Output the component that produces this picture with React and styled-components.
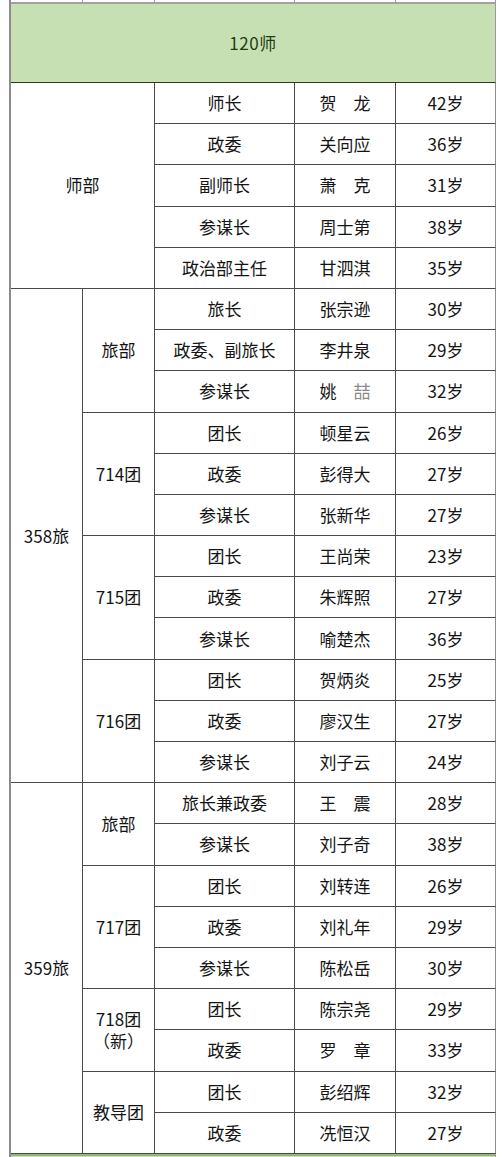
import React from 'react';
import styled, { createGlobalStyle } from 'styled-components';

const GlobalStyle = createGlobalStyle`
  html, body {
    margin: 0;
    padding: 0;
    background: #ffffff;
    overflow: hidden;
  }
  body {
    font-family: "Noto Sans CJK SC", "Noto Sans", sans-serif;
  }
`;

const Sheet = styled.div`
  display: grid;
  grid-template-columns: 72px 72px 140px 101px 100px;
  grid-template-rows: 4px 79px repeat(26, 41.2px) 30px;
  width: 485px;
  margin-left: 9px;
  border-left: 2px solid #8c8c8c;
`;

const Cell = styled.div`
  grid-column: span ${p => p.$colSpan || 1};
  grid-row: span ${p => p.$rowSpan || 1};
  display: flex;
  align-items: center;
  justify-content: center;
  box-sizing: border-box;
  border-right: 1px solid ${p => (p.$edge ? '#8c8c8c' : '#4a4a4a')};
  border-bottom: 1px solid #4a4a4a;
  font-size: 17px;
  line-height: 22px;
  color: #141414;
  text-align: center;
`;

const Label = styled.span`
  white-space: pre;
`;

const StripCell = styled(Cell)`
  border-right-color: #9a9a9a;
  border-bottom: 2px solid #a0a0a0;
`;

const HeaderCell = styled(Cell)`
  grid-column: span 5;
  background: #c6e0b4;
  border-right-color: #9a9a9a;
  border-bottom: 1px solid #2e3a28;
  color: #1f3d12;
  letter-spacing: 0.5px;
`;

const FooterCell = styled(Cell)`
  grid-column: span 5;
  background: #c6e0b4;
  border-top: 2px solid #8fb878;
  border-right-color: #9a9a9a;
`;

const Faint = styled.span`
  color: #8a8a8a;
`;

const data = [
  {
    name: '师部',
    whole: true,
    rows: [
      ['师长', '贺　龙', '42岁'],
      ['政委', '关向应', '36岁'],
      ['副师长', '萧　克', '31岁'],
      ['参谋长', '周士第', '38岁'],
      ['政治部主任', '甘泗淇', '35岁'],
    ],
  },
  {
    name: '358旅',
    groups: [
      {
        name: '旅部',
        rows: [
          ['旅长', '张宗逊', '30岁'],
          ['政委、副旅长', '李井泉', '29岁'],
          ['参谋长', <>姚　<Faint>喆</Faint></>, '32岁'],
        ],
      },
      {
        name: '714团',
        rows: [
          ['团长', '顿星云', '26岁'],
          ['政委', '彭得大', '27岁'],
          ['参谋长', '张新华', '27岁'],
        ],
      },
      {
        name: '715团',
        rows: [
          ['团长', '王尚荣', '23岁'],
          ['政委', '朱辉照', '27岁'],
          ['参谋长', '喻楚杰', '36岁'],
        ],
      },
      {
        name: '716团',
        rows: [
          ['团长', '贺炳炎', '25岁'],
          ['政委', '廖汉生', '27岁'],
          ['参谋长', '刘子云', '24岁'],
        ],
      },
    ],
  },
  {
    name: '359旅',
    groups: [
      {
        name: '旅部',
        rows: [
          ['旅长兼政委', '王　震', '28岁'],
          ['参谋长', '刘子奇', '38岁'],
        ],
      },
      {
        name: '717团',
        rows: [
          ['团长', '刘转连', '26岁'],
          ['政委', '刘礼年', '29岁'],
          ['参谋长', '陈松岳', '30岁'],
        ],
      },
      {
        name: '718团\n（新）',
        rows: [
          ['团长', '陈宗尧', '29岁'],
          ['政委', '罗　章', '33岁'],
        ],
      },
      {
        name: '教导团',
        rows: [
          ['团长', '彭绍辉', '32岁'],
          ['政委', '冼恒汉', '27岁'],
        ],
      },
    ],
  },
];

function PersonRow({ row }) {
  return (
    <>
      <Cell><Label>{row[0]}</Label></Cell>
      <Cell><Label>{row[1]}</Label></Cell>
      <Cell $edge><Label>{row[2]}</Label></Cell>
    </>
  );
}

export default function App() {
  const cells = [];
  data.forEach((section, si) => {
    if (section.whole) {
      cells.push(
        <Cell key={`s${si}`} $colSpan={2} $rowSpan={section.rows.length}>
          <Label>{section.name}</Label>
        </Cell>
      );
      section.rows.forEach((r, ri) => cells.push(<PersonRow key={`s${si}r${ri}`} row={r} />));
      return;
    }
    const total = section.groups.reduce((n, g) => n + g.rows.length, 0);
    cells.push(
      <Cell key={`s${si}`} $rowSpan={total}>
        <Label>{section.name}</Label>
      </Cell>
    );
    section.groups.forEach((g, gi) => {
      cells.push(
        <Cell key={`s${si}g${gi}`} $rowSpan={g.rows.length}>
          <Label>{g.name}</Label>
        </Cell>
      );
      g.rows.forEach((r, ri) => cells.push(<PersonRow key={`s${si}g${gi}r${ri}`} row={r} />));
    });
  });

  return (
    <>
      <GlobalStyle />
      <Sheet>
        <StripCell />
        <StripCell />
        <StripCell />
        <StripCell />
        <StripCell />
        <HeaderCell><Label>120师</Label></HeaderCell>
        {cells}
        <FooterCell />
      </Sheet>
    </>
  );
}
